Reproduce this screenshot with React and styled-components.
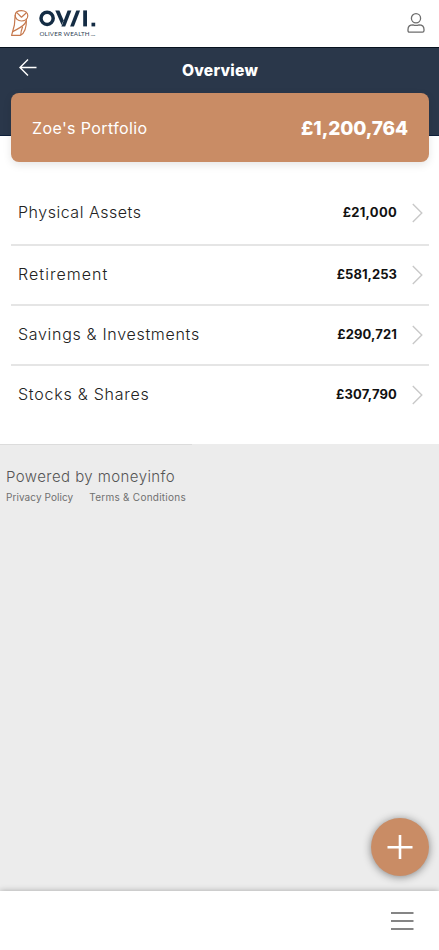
import React from 'react';
import styled, { createGlobalStyle } from 'styled-components';

const GlobalStyle = createGlobalStyle`
  * {
    box-sizing: border-box;
  }

  body {
    margin: 0;
    background: #ececec;
    font-family: 'Inter', 'Liberation Sans', sans-serif;
  }

  h1, h2, p {
    margin: 0;
    font-weight: inherit;
  }
`;

const Page = styled.div`
  display: flex;
  flex-direction: column;
  height: 950px;
  overflow: hidden;
`;

const TopBar = styled.header`
  flex: none;
  display: flex;
  justify-content: space-between;
  align-items: flex-start;
  height: 48px;
  padding: 8px 13px 0 10px;
  background: #fff;
  border-bottom: 1px solid #07121f;
`;

const PlainButton = styled.button`
  display: flex;
  padding: 0;
  border: none;
  background: none;
  cursor: pointer;
`;

const AccountButton = styled(PlainButton)`
  padding-top: 4px;
`;

const Hero = styled.section`
  flex: none;
  height: 128px;
  padding: 0 10px 0 11px;
  background: linear-gradient(#2a374a 87px, #0e203b 87px, #0e203b 88px, #fff 88px);
`;

const TitleRow = styled.div`
  display: grid;
  grid-template-columns: 40px 1fr 40px;
  height: 45px;
`;

const BackButton = styled(PlainButton)`
  padding: 10px 0 0 8px;
  align-items: flex-start;
`;

const Title = styled.h1`
  padding-top: 13px;
  color: #fff;
  font-size: 15.6px;
  line-height: 20px;
  font-weight: 800;
  letter-spacing: 0.25px;
  text-align: center;
`;

const PortfolioCard = styled.div`
  display: flex;
  justify-content: space-between;
  align-items: center;
  height: 69px;
  padding: 0 21px 0 21px;
  border-radius: 8px;
  background: #c98c65;
  color: #fff;
  box-shadow: 0 3px 9px rgba(0, 0, 0, 0.1);
`;

const PortfolioName = styled.h2`
  font-size: 16px;
  letter-spacing: 0.38px;
`;

const PortfolioTotal = styled.p`
  padding-top: 2px;
  font-size: 19px;
  font-weight: 800;
  letter-spacing: -0.1px;
`;

const AssetList = styled.main`
  flex: none;
  height: 268px;
  padding: 9px 10px 0 11px;
  background: #fff;
`;

const AssetRow = styled.div`
  display: flex;
  align-items: center;
  height: ${(props) => props.$height || 60}px;
  padding: 0 6px ${(props) => props.$lift || 0}px 7px;
  border-bottom: 2px solid ${(props) => (props.$last ? 'transparent' : '#e5e5e5')};
`;

const AssetName = styled.p`
  flex: 1;
  padding-bottom: 2px;
  color: #222;
  font-size: 16px;
  font-weight: 300;
  line-height: 20px;
  letter-spacing: ${(props) => props.$spacing};
`;

const AssetValue = styled.p`
  margin-right: 15px;
  padding-bottom: 2px;
  color: #111;
  font-size: 13px;
  font-weight: 700;
  letter-spacing: ${(props) => props.$spacing};
`;

const Footer = styled.footer`
  flex: 1;
  padding: 22px 6px;
  background: linear-gradient(#dcdcdc, #dcdcdc) 0 0 / 192px 1px no-repeat #ececec;
`;

const PoweredBy = styled.p`
  color: #555;
  font-size: 15px;
  font-weight: 300;
  line-height: 22px;
  letter-spacing: 0.43px;
`;

const FooterLinks = styled.div`
  display: flex;
  gap: 16px;
  padding-top: 2px;
`;

const FooterLink = styled.a`
  color: #707070;
  font-size: 10px;
  line-height: 14px;
  letter-spacing: ${(props) => props.$spacing};
`;

const BottomBar = styled.nav`
  flex: none;
  display: flex;
  justify-content: flex-end;
  align-items: flex-start;
  height: 59px;
  padding: 20px 25px 0 0;
  background: #fff;
  box-shadow: 0 0 6px rgba(0, 0, 0, 0.3);
`;

const AddButton = styled.button`
  position: absolute;
  top: 818px;
  left: 371px;
  display: flex;
  align-items: center;
  justify-content: center;
  width: 58px;
  height: 58px;
  padding: 0;
  border: none;
  border-radius: 50%;
  background: #c98c65;
  box-shadow: 0 1px 8px rgba(0, 0, 0, 0.45);
`;

const Logo = () => (
  <svg width="90" height="32" viewBox="10 8 90 32" fill="none">
    <g stroke="#c6794e" strokeWidth="1.2" strokeLinejoin="round">
      {/* head, brow and beak */}
      <path d="M15.2 15C15.4 12.2 18 10.6 21.5 10.6C25 10.6 27.8 12.6 27.8 15.8C27.8 19 25 21 21.5 21C18 21 15 18.6 15.2 15Z" />
      <path d="M16.8 12.6L21.5 17.2L26.4 12.8" />
      {/* body and folded wing */}
      <path d="M15.2 15L14.4 25L11.6 35.3H20.5C25.2 33 26.6 27 26.4 18.5" />
      <path d="M26.2 21C25 26 18.5 28.5 12.8 31.6M20.8 35.2C20.6 32.5 21.4 30 22.6 26.8" />
    </g>
    <circle cx="47.1" cy="18.3" r="6.1" stroke="#142c44" strokeWidth="3.5" />
    {/* slanted strokes with flat ends */}
    <g fill="#142c44">
      <polygon points="55.3,10.4 59.4,10.4 63.6,20.2 61.6,25" />
      <polygon points="67.6,10.4 71.4,10.4 65.2,26.4 61.4,26.4" />
      <polygon points="76.3,10.4 80.1,10.4 73.9,26.4 70.1,26.4" />
      <rect x="83.2" y="10.4" width="3.8" height="16" />
      <rect x="91.5" y="22.7" width="3.7" height="3.7" />
    </g>
    <text x="39.5" y="35.7" fill="#2f4256" fontSize="6.2" fontFamily="Lato" textLength="50">OLIVER WEALTH</text>
    <text x="90.7" y="35.7" fill="#3b4c5f" fontSize="2.6" fontFamily="Lato">LTD</text>
  </svg>
);

const UserIcon = () => (
  <svg width="19" height="22" viewBox="0 0 19 22" fill="none" stroke="#6d6d6d" strokeWidth="1.3">
    <circle cx="9" cy="6.3" r="4.6" />
    <path d="M1 19V17.5C1 14 3 12.8 6 12.8Q9 14 12 12.8C15 12.8 17 14 17 17.5V18.5Q17 20.2 15.5 20.2H2.5Q1 20.2 1 18.5" />
  </svg>
);

const BackIcon = () => (
  <svg width="18" height="20" viewBox="0 0 18 20" fill="none" stroke="#fff" strokeWidth="1.4">
    <path d="M9 1.5L1 9.5L9 17.5M1 9.5H17.5" />
  </svg>
);

const Chevron = () => (
  <svg width="11" height="20" viewBox="0 0 11 20" fill="none" stroke="#c9c9c9" strokeWidth="1.4">
    <path d="M0.8 1L9.8 10L0.8 19" />
  </svg>
);

const PlusIcon = () => (
  <svg width="26" height="26" viewBox="0 0 26 26" stroke="#fff" strokeWidth="2.6">
    <path d="M13 1V25M0.5 13.2H25.5" />
  </svg>
);

const MenuIcon = () => (
  <svg width="24" height="20" viewBox="0 0 24 20" stroke="#858585" strokeWidth="2">
    <path d="M1 2H23.5M1 10H23.5M1 18H23.5" />
  </svg>
);

const assets = [
  { name: 'Physical Assets', value: '£21,000', height: 61, lift: 3, nameSpacing: '0.52px', valueSpacing: '0.28px' },
  { name: 'Retirement', value: '£581,253', nameSpacing: '1.05px', valueSpacing: '0.05px' },
  { name: 'Savings & Investments', value: '£290,721', nameSpacing: '0.69px', valueSpacing: '0.14px' },
  { name: 'Stocks & Shares', value: '£307,790', nameSpacing: '0.76px', valueSpacing: '0.14px', last: true },
];

const App = () => {
  return (
    <Page>
      <GlobalStyle />
      <TopBar>
        <Logo />
        <AccountButton aria-label="Account"><UserIcon /></AccountButton>
      </TopBar>
      <Hero>
        <TitleRow>
          <BackButton aria-label="Back"><BackIcon /></BackButton>
          <Title>Overview</Title>
        </TitleRow>
        <PortfolioCard>
          <PortfolioName>Zoe's Portfolio</PortfolioName>
          <PortfolioTotal>£1,200,764</PortfolioTotal>
        </PortfolioCard>
      </Hero>
      <AssetList>
        {assets.map((asset) => (
          <AssetRow key={asset.name} $height={asset.height} $lift={asset.lift} $last={asset.last}>
            <AssetName $spacing={asset.nameSpacing}>{asset.name}</AssetName>
            <AssetValue $spacing={asset.valueSpacing}>{asset.value}</AssetValue>
            <Chevron />
          </AssetRow>
        ))}
      </AssetList>
      <Footer>
        <PoweredBy>Powered by moneyinfo</PoweredBy>
        <FooterLinks>
          <FooterLink $spacing="0.08px">Privacy Policy</FooterLink>
          <FooterLink $spacing="0.25px">Terms & Conditions</FooterLink>
        </FooterLinks>
      </Footer>
      <BottomBar>
        <PlainButton aria-label="Menu"><MenuIcon /></PlainButton>
      </BottomBar>
      <AddButton aria-label="Add"><PlusIcon /></AddButton>
    </Page>
  );
};

export default App;
